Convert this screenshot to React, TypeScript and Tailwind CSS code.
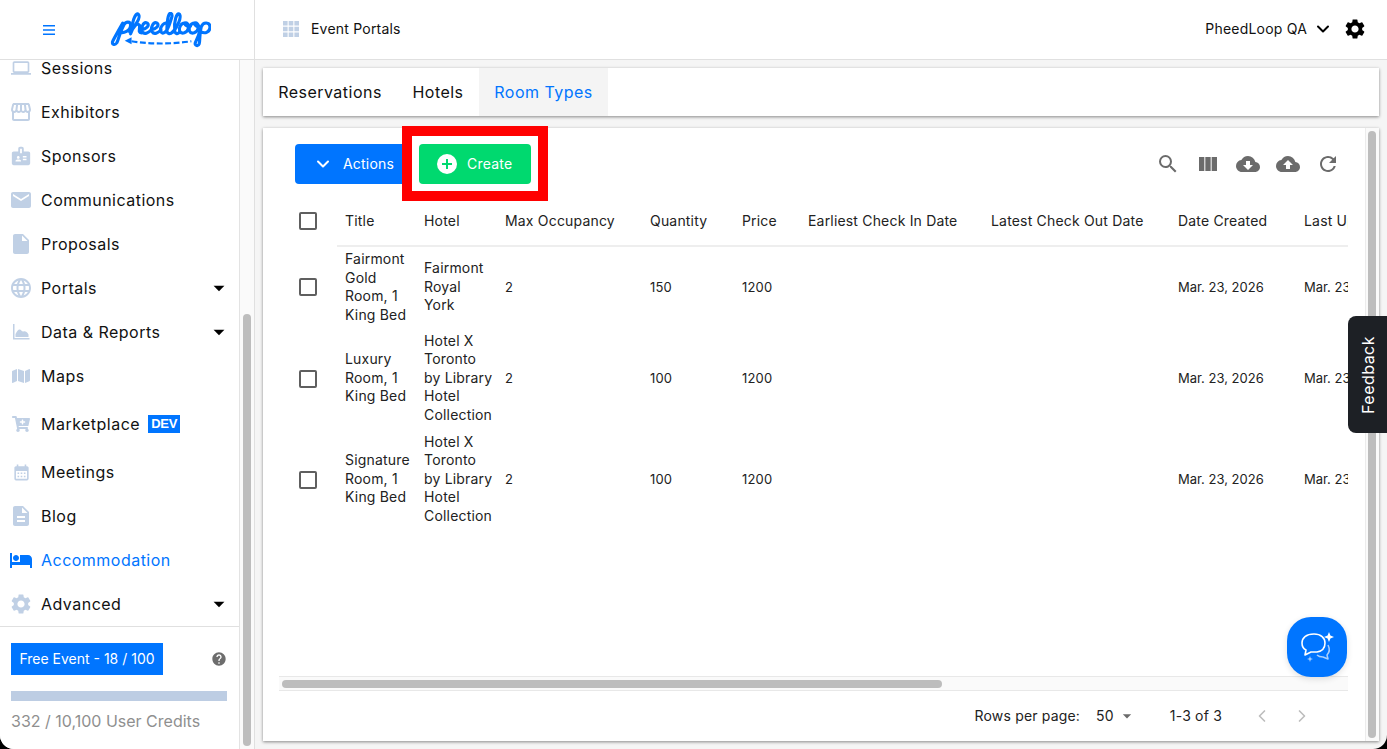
import type { ReactNode } from 'react'
import { ChevronDown, ChevronLeft, ChevronRight } from 'lucide-react'
import {
  MdArrowDropDown,
  MdBadge,
  MdCalendarMonth,
  MdCloudDownload,
  MdCloudUpload,
  MdDescription,
  MdHelp,
  MdHotel,
  MdInsertDriveFile,
  MdLanguage,
  MdLaptop,
  MdMail,
  MdOutlineStorefront,
  MdRefresh,
  MdSearch,
  MdSettings,
  MdViewColumn,
} from 'react-icons/md'
import { FaCartPlus, FaMap } from 'react-icons/fa'

type NavItem = {
  label: string
  icon: ReactNode
  caret?: boolean
  active?: boolean
  badge?: string
  height?: string
}

const iconTone = 'text-[#c0d0e5]'

function DataIcon() {
  return (
    <svg width="18" height="16" viewBox="0 0 18 16" fill="currentColor">
      <path d="M1 0h1.5v14H17.5v1.5H1z" />
      <path d="M3.5 13v-3C5 7 6.5 5 8 5.500 9.500 6 10 8 11.500 7.500 13 7 15 7.500 16.500 10.500V13z" />
    </svg>
  )
}

const navItems: NavItem[] = [
  { label: 'Sessions', icon: <MdLaptop size={20} /> },
  { label: 'Exhibitors', icon: <MdOutlineStorefront size={24} /> },
  { label: 'Sponsors', icon: <MdBadge size={22} /> },
  { label: 'Communications', icon: <MdMail size={24} /> },
  { label: 'Proposals', icon: <MdInsertDriveFile size={24} /> },
  { label: 'Portals', icon: <MdLanguage size={24} />, caret: true },
  { label: 'Data & Reports', icon: <DataIcon />, caret: true },
  { label: 'Maps', icon: <FaMap size={18} /> },
  { label: 'Marketplace', icon: <FaCartPlus size={18} />, badge: 'DEV', height: 'h-[52px]' },
  { label: 'Meetings', icon: <MdCalendarMonth size={19} /> },
  { label: 'Blog', icon: <MdDescription size={24} /> },
  { label: 'Accommodation', icon: <MdHotel size={24} />, active: true },
  { label: 'Advanced', icon: <MdSettings size={24} />, caret: true },
]

const columns = [
  { label: 'Title', width: 'w-[79px]' },
  { label: 'Hotel', width: 'w-[81px]' },
  { label: 'Max Occupancy', width: 'w-[145px]' },
  { label: 'Quantity', width: 'w-[92px]' },
  { label: 'Price', width: 'w-[66px]' },
  { label: 'Earliest Check In Date', width: 'w-[183px]' },
  { label: 'Latest Check Out Date', width: 'w-[187px]' },
  { label: 'Date Created', width: 'w-[126px]' },
  { label: 'Last Updated', width: 'w-[126px]' },
]

const rows = [
  {
    title: ['Fairmont', 'Gold', 'Room, 1', 'King Bed'],
    hotel: ['Fairmont', 'Royal', 'York'],
    quantity: '150',
    height: 'h-[82px]',
  },
  {
    title: ['Luxury', 'Room, 1', 'King Bed'],
    hotel: ['Hotel X', 'Toronto', 'by Library', 'Hotel', 'Collection'],
    quantity: '100',
    height: 'h-[101px]',
  },
  {
    title: ['Signature', 'Room, 1', 'King Bed'],
    hotel: ['Hotel X', 'Toronto', 'by Library', 'Hotel', 'Collection'],
    quantity: '100',
    height: 'h-[101px]',
  },
]

function Logo() {
  return (
    <svg width="101" height="36" viewBox="0 0 103 36" fill="none" className="text-[#0075ff]">
      <g stroke="currentColor" strokeWidth="3.2" strokeLinecap="round" strokeLinejoin="round">
        <path d="M13 11 C9 18 5 25 3 29 C1 33 5 34 7 31 C9 27 10 20 14 13 C16 9 21 9 21 13 C21 19 14 22 9 20" />
        <path d="M20 20 C25 15 32 5 29 2 C26 -1 22 11 21 22 C23 15 28 10 30 13 C31 16 28 21 32 21" />
        <path d="M32 18 C37 17 41 13 38 11 C34 9 31 16 33 20 C35 23 39 21 42 18" />
        <path d="M42 18 C47 17 51 13 48 11 C44 9 41 16 43 20 C45 23 49 21 52 18" />
        <path d="M60 12 C56 8 50 15 52 20 C54 23 58 20 60 14 C62 8 65 2 62 1 C59 0 58 12 58 18 C58 22 61 23 64 20" />
        <path d="M64 20 C69 15 73 5 71 2 C68 -1 65 10 66 18 C66 22 69 23 71 20" />
        <path d="M76 11 C72 11 70 16 71 19 C73 23 79 21 80 16 C81 12 78 10 76 11 C77 14 80 15 82 14" />
        <path d="M86 11 C82 11 80 16 81 19 C83 23 89 21 90 16 C91 12 88 10 86 11 C87 14 89 15 91 14" />
        <path d="M92 17 C91 22 89 27 87 31 C86 34 90 35 91 32 C92 28 91 22 93 15 C95 9 102 10 102 15 C102 20 97 22 93 20" />
      </g>
      <path d="M22 29.500 Q52 34 83 29.500" stroke="currentColor" strokeWidth="2.200" strokeDasharray="6 2.600" />
      <path d="M15 29 L22 25.500 L22 32.500 Z" fill="currentColor" />
    </svg>
  )
}

function ChatIcon() {
  return (
    <svg width="34" height="30" viewBox="0 0 34 30" fill="none">
      <path
        d="M14 2 C6 2 2 6 2 11 C2 14 4 17 6 18 L5 23 L11 20 C13 20 15 20 17 20 C23 19 25 15 25 11 C25 6 21 2 14 2 Z"
        stroke="white"
        strokeWidth="1.600"
        strokeLinejoin="round"
      />
      <path d="M28 13 C30 17 29 21 27 23 L28 27 L23 25 C20 25 18 24 17 23" stroke="#a9cffc" strokeWidth="1.500" strokeLinejoin="round" />
      <path d="M29 0 L30.400 3.600 L34 5 L30.400 6.400 L29 10 L27.600 6.400 L24 5 L27.600 3.600 Z" fill="white" />
      <path d="M10 24 L10.800 26.200 L13 27 L10.800 27.800 L10 30 L9.200 27.800 L7 27 L9.200 26.200 Z" fill="#a9cffc" />
    </svg>
  )
}

function Checkbox() {
  return <span className="block h-[18px] w-[18px] rounded-[2px] border-2 border-[#5f5f5f] bg-white" />
}

function Sidebar() {
  return (
    <aside className="flex w-[240px] shrink-0 flex-col border-r border-[#e3e3e3] bg-white">
      <nav className="min-h-0 flex-1 overflow-hidden">
        <ul className="-mt-[14px]">
          {navItems.map((item) => (
            <li key={item.label} className={`flex items-center pr-[7px] pl-[9px] ${item.height ?? 'h-[44px]'}`}>
              <span
                className={`flex h-6 w-6 shrink-0 items-center justify-center ${item.active ? 'text-[#0075ff]' : iconTone}`}
              >
                {item.icon}
              </span>
              <span className={`ml-2 text-base ${item.active ? 'text-[#0075ff]' : 'text-[#111]'}`}>{item.label}</span>
              {item.badge && (
                <span className="ml-2 flex h-[18px] w-[32px] items-center justify-center bg-[#0075ff] font-['Liberation_Sans',sans-serif] text-[13px] font-bold tracking-[-0.02em] text-white">
                  {item.badge}
                </span>
              )}
              {item.caret && <MdArrowDropDown size={26} className="ml-auto text-black" />}
            </li>
          ))}
        </ul>
      </nav>
      <div className="h-[123px] shrink-0 border-t border-[#e0e0e0] px-[11px] pt-4 tracking-normal">
        <div className="flex items-center justify-between">
          <span className="flex h-8 w-[152px] items-center justify-center bg-[#0075ff] text-sm text-white">
            Free Event - 18 / 100
          </span>
          <MdHelp size={16} className="mr-[1px] text-[#6d6d6d]" />
        </div>
        <div className="mt-4 h-[10px] w-[216px] bg-[#bdcde3]" />
        <p className="mt-2 text-base text-[#8f8f8f]">332 / 10,100 User Credits</p>
      </div>
    </aside>
  )
}

function Toolbar() {
  return (
    <div className="flex h-[70px] shrink-0 items-center justify-between pt-[2px] pr-2 pl-4">
      <div className="flex items-center gap-[9px] tracking-[0.013em]">
        <button className="flex h-10 w-[115px] items-center rounded-[4px] bg-[#0075ff] pl-[18px] text-sm text-white">
          <ChevronDown size={20} strokeWidth={2.4} />
          <span className="ml-[10px]">Actions</span>
        </button>
        <button className="flex h-10 w-[112px] items-center rounded-[4px] bg-[#00d96f] pl-[18px] text-sm text-white">
          <span className="flex h-5 w-5 items-center justify-center rounded-full bg-white">
            <svg width="10" height="10" viewBox="0 0 10 10" className="text-[#00d96f]">
              <path d="M5 0v10M0 5h10" stroke="currentColor" strokeWidth="2" />
            </svg>
          </span>
          <span className="ml-[10px]">Create</span>
        </button>
      </div>
      <div className="flex items-center gap-4 text-[#6b6b6b]">
        <MdSearch size={24} />
        <MdViewColumn size={24} />
        <MdCloudDownload size={24} />
        <MdCloudUpload size={24} />
        <MdRefresh size={24} />
      </div>
    </div>
  )
}

function DataTable() {
  return (
    <div className="min-h-0 flex-1 overflow-hidden">
      <table className="w-[1143px] table-fixed border-collapse text-sm tracking-[0.013em] text-[#222]">
        <thead>
          <tr className="h-[48px]">
            <th className="w-[58px] p-0 pb-[2px] font-normal">
              <span className="flex justify-center">
                <Checkbox />
              </span>
            </th>
            {columns.map((col) => (
              <th
                key={col.label}
                className={`${col.width} border-b-2 border-[#eeeeee] px-2 pt-0 pb-[2px] text-left font-normal whitespace-nowrap`}
              >
                {col.label}
              </th>
            ))}
          </tr>
        </thead>
        <tbody>
          {rows.map((row) => (
            <tr key={row.title.join(' ')} className={row.height}>
              <td className="p-0">
                <span className="flex justify-center">
                  <Checkbox />
                </span>
              </td>
              <td className="px-2 pt-0 pb-[1px] leading-[18.5px] whitespace-nowrap">
                {row.title.map((line) => (
                  <div key={line}>{line}</div>
                ))}
              </td>
              <td className="px-2 pt-0 pb-[1px] leading-[18.5px] whitespace-nowrap">
                {row.hotel.map((line) => (
                  <div key={line}>{line}</div>
                ))}
              </td>
              <td className="px-2 pt-0 pb-[1px] text-[13px]">2</td>
              <td className="px-2 pt-0 pb-[1px] text-[13px]">{row.quantity}</td>
              <td className="px-2 pt-0 pb-[1px] text-[13px]">1200</td>
              <td className="px-2 py-0" />
              <td className="px-2 py-0" />
              <td className="px-2 pt-0 pb-[1px] text-[13px] tracking-normal whitespace-nowrap">Mar. 23, 2026</td>
              <td className="px-2 pt-0 pb-[1px] text-[13px] tracking-normal whitespace-nowrap">Mar. 23, 2026</td>
            </tr>
          ))}
        </tbody>
      </table>
    </div>
  )
}

function TablePanel() {
  return (
    <section className="flex min-h-0 min-w-0 flex-1">
      <div className="flex min-w-0 flex-1 flex-col pr-[17px] pl-4">
        <Toolbar />
        <DataTable />
        <div className="h-[15px] shrink-0 border-y border-[#e8e8e8] bg-[#fafafa] px-[3px] pt-[3px]">
          <div className="h-2 w-[660px] rounded-full bg-[#bdbdbd]" />
        </div>
        <div className="flex h-[50px] shrink-0 items-center justify-end text-sm tracking-[0.013em] text-[#222]">
          <span>Rows per page:</span>
          <span className="ml-4">50</span>
          <MdArrowDropDown size={20} className="ml-[3px] text-[#6b6b6b]" />
          <span className="ml-[33px]">1-3 of 3</span>
          <ChevronLeft size={20} className="ml-[30px] text-[#bdbdbd]" />
          <ChevronRight size={20} className="ml-5 text-[#bdbdbd]" />
          <span className="w-[36px]" />
        </div>
      </div>
      <div className="w-[14px] shrink-0 border-l border-[#ececec] bg-[#fafafa] px-[2px] py-[3px]">
        <div className="h-full w-2 rounded-full bg-[#bdbdbd]" />
      </div>
    </section>
  )
}

export default function App() {
  return (
    <div className="h-[749px] w-[1387px] overflow-hidden bg-black font-['Inter','Liberation_Sans',sans-serif] tracking-[0.03em]">
      <div className="relative flex h-full flex-col overflow-hidden rounded-b-[14px] bg-[#f5f5f5]">
        <header className="flex h-[60px] shrink-0 border-b border-[#e0e0e0] bg-white">
          <div className="flex w-[255px] shrink-0 items-center border-r border-[#e0e0e0] pl-[43px]">
            <svg width="12" height="10" viewBox="0 0 12 10" className="text-[#0075ff]">
              <path d="M0 .75h12M0 5h12M0 9.250h12" stroke="currentColor" strokeWidth="1.500" />
            </svg>
            <span className="ml-[55px]">
              <Logo />
            </span>
          </div>
          <div className="flex flex-1 items-center pr-5 pb-[2px] pl-7 tracking-[0.013em]">
            <svg width="16" height="16" viewBox="0 0 16 16" className="text-[#c0d0e5]">
              <path
                d="M0 0h4.600v4.600H0zM5.700 0h4.600v4.600H5.700zM11.400 0H16v4.600h-4.600zM0 5.700h4.600v4.600H0zM5.700 5.700h4.600v4.600H5.700zM11.400 5.700H16v4.600h-4.600zM0 11.400h4.600V16H0zM5.700 11.400h4.600V16H5.700zM11.400 11.400H16V16h-4.600z"
                fill="currentColor"
              />
            </svg>
            <span className="ml-3 text-sm text-[#111]">Event Portals</span>
            <span className="ml-auto text-sm text-[#111]">PheedLoop QA</span>
            <ChevronDown size={20} strokeWidth={2.4} className="ml-[6px] text-black" />
            <MdSettings size={24} className="ml-[10px] text-black" />
          </div>
        </header>

        <div className="flex min-h-0 flex-1">
          <Sidebar />
          <div className="w-[15px] shrink-0 border-r border-[#e0e0e0] bg-[#fafafa] pt-[254px] pr-[3px] pb-[3px] pl-[3px]">
            <div className="h-full w-2 rounded-full bg-[#bdbdbd]" />
          </div>

          <main className="flex min-w-0 flex-1 flex-col pt-2 pr-2 pb-2 pl-2">
            <div className="flex h-[48px] shrink-0 bg-white text-base shadow-[0_1px_3px_rgba(0,0,0,0.45)]">
              <span className="flex w-[134px] items-center justify-center text-[#111]">Reservations</span>
              <span className="flex w-[82px] items-center justify-center text-[#111]">Hotels</span>
              <span className="flex w-[129px] items-center justify-center bg-[#f4f4f4] text-[#0075ff]">Room Types</span>
            </div>
            <div className="mt-3 flex min-h-0 flex-1 bg-white shadow-[0_1px_3px_rgba(0,0,0,0.45)]">
              <TablePanel />
            </div>
          </main>
        </div>

        <div className="absolute top-[126px] left-[402px] h-[75px] w-[146px] border-[10px] border-[#ff0000]" />

        <div className="absolute top-[316px] right-0 flex h-[117px] w-[39px] items-center justify-center rounded-l-[8px] bg-[#1d2025] text-base text-white">
          <span className="rotate-180 [writing-mode:vertical-rl]">Feedback</span>
        </div>

        <div className="absolute top-[617px] left-[1287px] flex h-[60px] w-[60px] items-center justify-center rounded-[24px] bg-[#0075ff] shadow-[0_2px_6px_rgba(0,0,0,0.12)]">
          <ChatIcon />
        </div>
      </div>
    </div>
  )
}
